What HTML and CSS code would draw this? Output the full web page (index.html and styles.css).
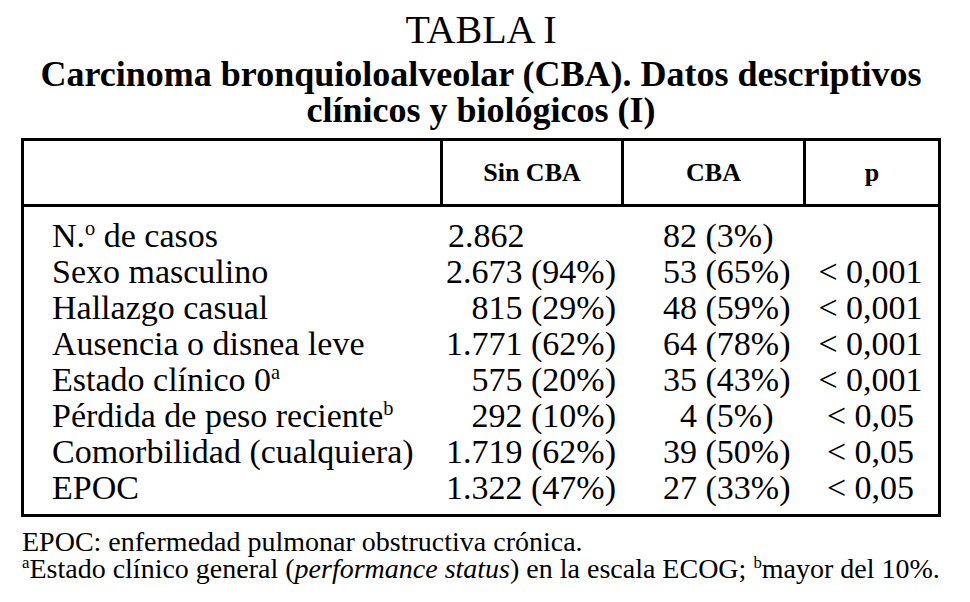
FILE: index.html
```html
<!DOCTYPE html>
<html lang="es">
<head>
<meta charset="utf-8">
<title>Tabla I</title>
<link rel="stylesheet" href="styles.css">
</head>
<body>
<div class="page">
  <h1 class="title">TABLA I</h1>
  <h2 class="subtitle">Carcinoma bronquioloalveolar (CBA). Datos descriptivos<br>clínicos y biológicos (I)</h2>
  <table class="data">
    <thead>
      <tr>
        <th class="c1"></th>
        <th class="c2">Sin CBA</th>
        <th class="c3">CBA</th>
        <th class="c4">p</th>
      </tr>
    </thead>
    <tbody>
      <tr class="first">
        <td class="c1">N.<sup>o</sup> de casos</td>
        <td class="c2 lead">2.862</td>
        <td class="c3">82 (3%)</td>
        <td class="c4"></td>
      </tr>
      <tr>
        <td class="c1">Sexo masculino</td>
        <td class="c2">2.673 (94%)</td>
        <td class="c3">53 (65%)</td>
        <td class="c4">&lt; 0,001</td>
      </tr>
      <tr>
        <td class="c1">Hallazgo casual</td>
        <td class="c2">815 (29%)</td>
        <td class="c3">48 (59%)</td>
        <td class="c4">&lt; 0,001</td>
      </tr>
      <tr>
        <td class="c1">Ausencia o disnea leve</td>
        <td class="c2">1.771 (62%)</td>
        <td class="c3">64 (78%)</td>
        <td class="c4">&lt; 0,001</td>
      </tr>
      <tr>
        <td class="c1">Estado clínico 0<sup>a</sup></td>
        <td class="c2">575 (20%)</td>
        <td class="c3">35 (43%)</td>
        <td class="c4">&lt; 0,001</td>
      </tr>
      <tr>
        <td class="c1">Pérdida de peso reciente<sup>b</sup></td>
        <td class="c2">292 (10%)</td>
        <td class="c3 pad">4 (5%)</td>
        <td class="c4">&lt; 0,05</td>
      </tr>
      <tr>
        <td class="c1">Comorbilidad (cualquiera)</td>
        <td class="c2">1.719 (62%)</td>
        <td class="c3">39 (50%)</td>
        <td class="c4">&lt; 0,05</td>
      </tr>
      <tr class="last">
        <td class="c1">EPOC</td>
        <td class="c2">1.322 (47%)</td>
        <td class="c3">27 (33%)</td>
        <td class="c4">&lt; 0,05</td>
      </tr>
    </tbody>
  </table>
  <div class="notes">
    <p>EPOC: enfermedad pulmonar obstructiva crónica.</p>
    <p><sup>a</sup>Estado clínico general (<em>performance status</em>) en la escala ECOG; <sup>b</sup>mayor del 10%.</p>
  </div>
</div>
</body>
</html>
```

FILE: styles.css
```css
html, body {
  margin: 0;
  padding: 0;
  background: #fff;
}

body,
.title,
.subtitle,
.data,
.data th,
.data td,
.notes,
.notes p,
.notes em,
sup {
  font-family: "Liberation Serif", "Times New Roman", "DejaVu Serif", serif;
}

body {
  color: #000;
}

.page {
  width: 970px;
  height: 602px;
  overflow: hidden;
}

.title,
.subtitle {
  width: 920px;
  margin: 0 0 0 21px;
  text-align: center;
}

.title {
  padding-top: 10px;
  font-weight: normal;
  font-size: 40px;
  line-height: 40px;
}

.subtitle {
  font-weight: bold;
  font-size: 36px;
  line-height: 36px;
  padding-top: 6px;
}

.data {
  margin: 10px 0 0 21px;
  width: 920px;
  border: 3px solid #000;
  border-collapse: separate;
  border-spacing: 0;
  table-layout: fixed;
}

.data th {
  height: 63px;
  padding: 0;
  font-weight: bold;
  font-size: 26px;
  text-align: center;
  vertical-align: middle;
  border-bottom: 3px solid #000;
}

.data th.c2,
.data th.c3,
.data th.c4 {
  border-left: 3px solid #000;
}

.data th.c1 { width: 416px; }
.data th.c2 { width: 178px; }
.data th.c3 { width: 179px; }
.data th.c4 { width: 132px; }

.data td {
  font-size: 34px;
  font-weight: normal;
  line-height: 36px;
  padding: 0;
  white-space: nowrap;
}

.data tr.first td { padding-top: 11px; }
.data tr.last td { padding-bottom: 8px; }

.data td.c1 { padding-left: 28px; }
.data td.c2 { text-align: right; padding-right: 5px; }
.data td.c2.lead { text-align: left; padding-left: 8px; padding-right: 0; }
.data td.c3 { text-align: left; padding-left: 42px; }
.data td.c3.pad { padding-left: 59px; }
.data td.c4 { text-align: center; }

sup {
  font-size: 0.6em;
  line-height: 0;
  vertical-align: 0.6em;
}

.notes {
  padding-left: 22px;
  margin-top: 11px;
}

.notes p {
  margin: 0;
  font-size: 28px;
  line-height: 27px;
}

.notes em {
  font-style: italic;
}
```
